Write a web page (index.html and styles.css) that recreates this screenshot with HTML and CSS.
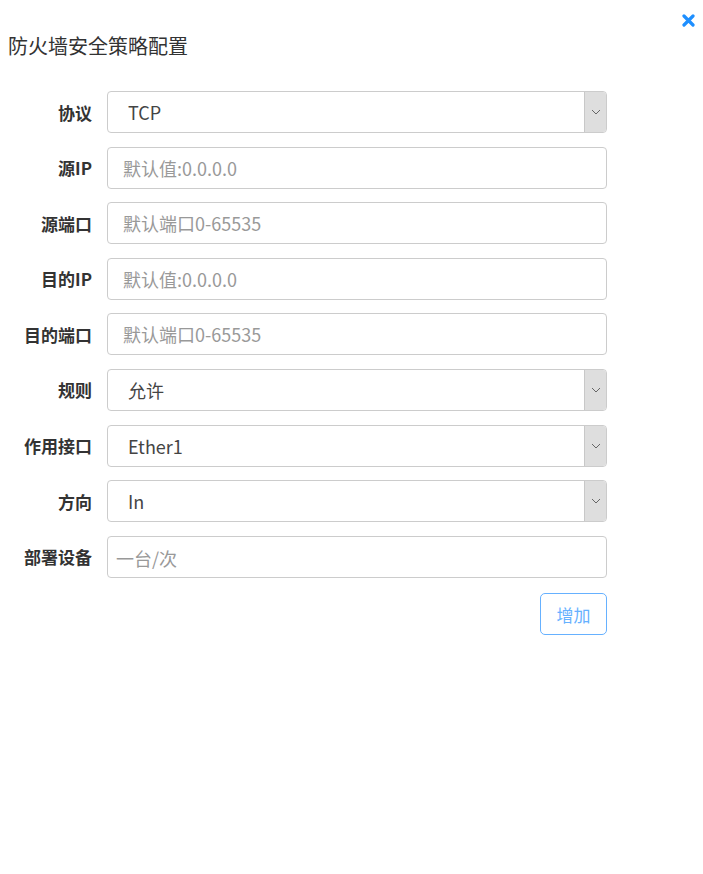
FILE: index.html
```html
<!DOCTYPE html>
<html lang="zh-CN">
<head>
<meta charset="utf-8">
<title>防火墙安全策略配置</title>
<link rel="stylesheet" href="styles.css">
</head>
<body>
<div class="dialog">
  <div class="header">
    <h1 class="title">防火墙安全策略配置</h1>
    <span class="close" aria-label="关闭">
      <svg width="13" height="13" viewBox="0 0 13 13"><path d="M2 2 L11 11 M11 2 L2 11" stroke="#1e8fff" stroke-width="3.2" stroke-linecap="round"/></svg>
    </span>
  </div>
  <form class="form">
    <div class="row"><label class="lbl">协议</label><div class="select"><span class="val">TCP</span><span class="arrow"><svg width="10" height="6" viewBox="0 0 10 6"><path d="M1 1 L5 5 L9 1" fill="none" stroke="#666" stroke-width="1"/></svg></span></div></div>
    <div class="row"><label class="lbl">源IP</label><input class="input" placeholder="默认值:0.0.0.0"></div>
    <div class="row"><label class="lbl">源端口</label><input class="input" placeholder="默认端口0-65535"></div>
    <div class="row"><label class="lbl">目的IP</label><input class="input" placeholder="默认值:0.0.0.0"></div>
    <div class="row"><label class="lbl">目的端口</label><input class="input" placeholder="默认端口0-65535"></div>
    <div class="row"><label class="lbl">规则</label><div class="select"><span class="val">允许</span><span class="arrow"><svg width="10" height="6" viewBox="0 0 10 6"><path d="M1 1 L5 5 L9 1" fill="none" stroke="#666" stroke-width="1"/></svg></span></div></div>
    <div class="row"><label class="lbl">作用接口</label><div class="select"><span class="val">Ether1</span><span class="arrow"><svg width="10" height="6" viewBox="0 0 10 6"><path d="M1 1 L5 5 L9 1" fill="none" stroke="#666" stroke-width="1"/></svg></span></div></div>
    <div class="row"><label class="lbl">方向</label><div class="select"><span class="val">In</span><span class="arrow"><svg width="10" height="6" viewBox="0 0 10 6"><path d="M1 1 L5 5 L9 1" fill="none" stroke="#666" stroke-width="1"/></svg></span></div></div>
    <div class="row"><label class="lbl">部署设备</label><input class="input input-tight" placeholder="一台/次"></div>
    <div class="actions"><button type="button" class="btn">增加</button></div>
  </form>
</div>
</body>
</html>
```
FILE: styles.css
```css
* { box-sizing: border-box; }
html, body { margin: 0; padding: 0; background: #fff; }
body {
  font-family: "Microsoft YaHei", "Noto Sans CJK SC", "Noto Sans", sans-serif;
  color: #333;
}
.dialog { width: 703px; height: 874px; }
.header {
  display: flex;
  justify-content: space-between;
  align-items: flex-start;
  padding: 0 8px 0 8px;
}
.title {
  margin: 33px 0 0;
  font-size: 20px;
  font-weight: normal;
  line-height: 26px;
  color: #333;
}
.close { margin-top: 14px; display: block; line-height: 0; }
.form {
  margin-top: 32px;
  display: flex;
  flex-direction: column;
  gap: 13.6px;
}
.row {
  display: flex;
  align-items: center;
  height: 42px;
}
.lbl {
  width: 92px;
  text-align: right;
  font-size: 17px;
  font-weight: bold;
  color: #333;
  margin-right: 15px;
}
.input, .select {
  width: 500px;
  height: 42px;
  border: 1px solid #ccc;
  border-radius: 4px;
  font-family: inherit;
  font-size: 18px;
  color: #444;
  background: #fff;
}
.input { padding: 0 15px; outline: none; }
.input::placeholder { color: #999; }
.input-tight { padding-left: 8px; padding-top: 3px; }
.select {
  display: flex;
  align-items: stretch;
  overflow: hidden;
}
.val {
  flex: 1;
  display: flex;
  align-items: center;
  padding-left: 20px;
  color: #444;
}
.arrow {
  width: 22px;
  background: #dedede;
  border-left: 1px solid #c8c8c8;
  display: flex;
  align-items: center;
  justify-content: center;
}
.actions {
  display: flex;
  justify-content: flex-end;
  width: 607px;
  margin-top: 2px;
}
.btn {
  width: 67px;
  height: 42px;
  border: 1px solid #66b1ff;
  border-radius: 5px;
  background: #fff;
  color: #66b1ff;
  font-family: inherit;
  font-size: 17px;
  padding: 0;
}
```
